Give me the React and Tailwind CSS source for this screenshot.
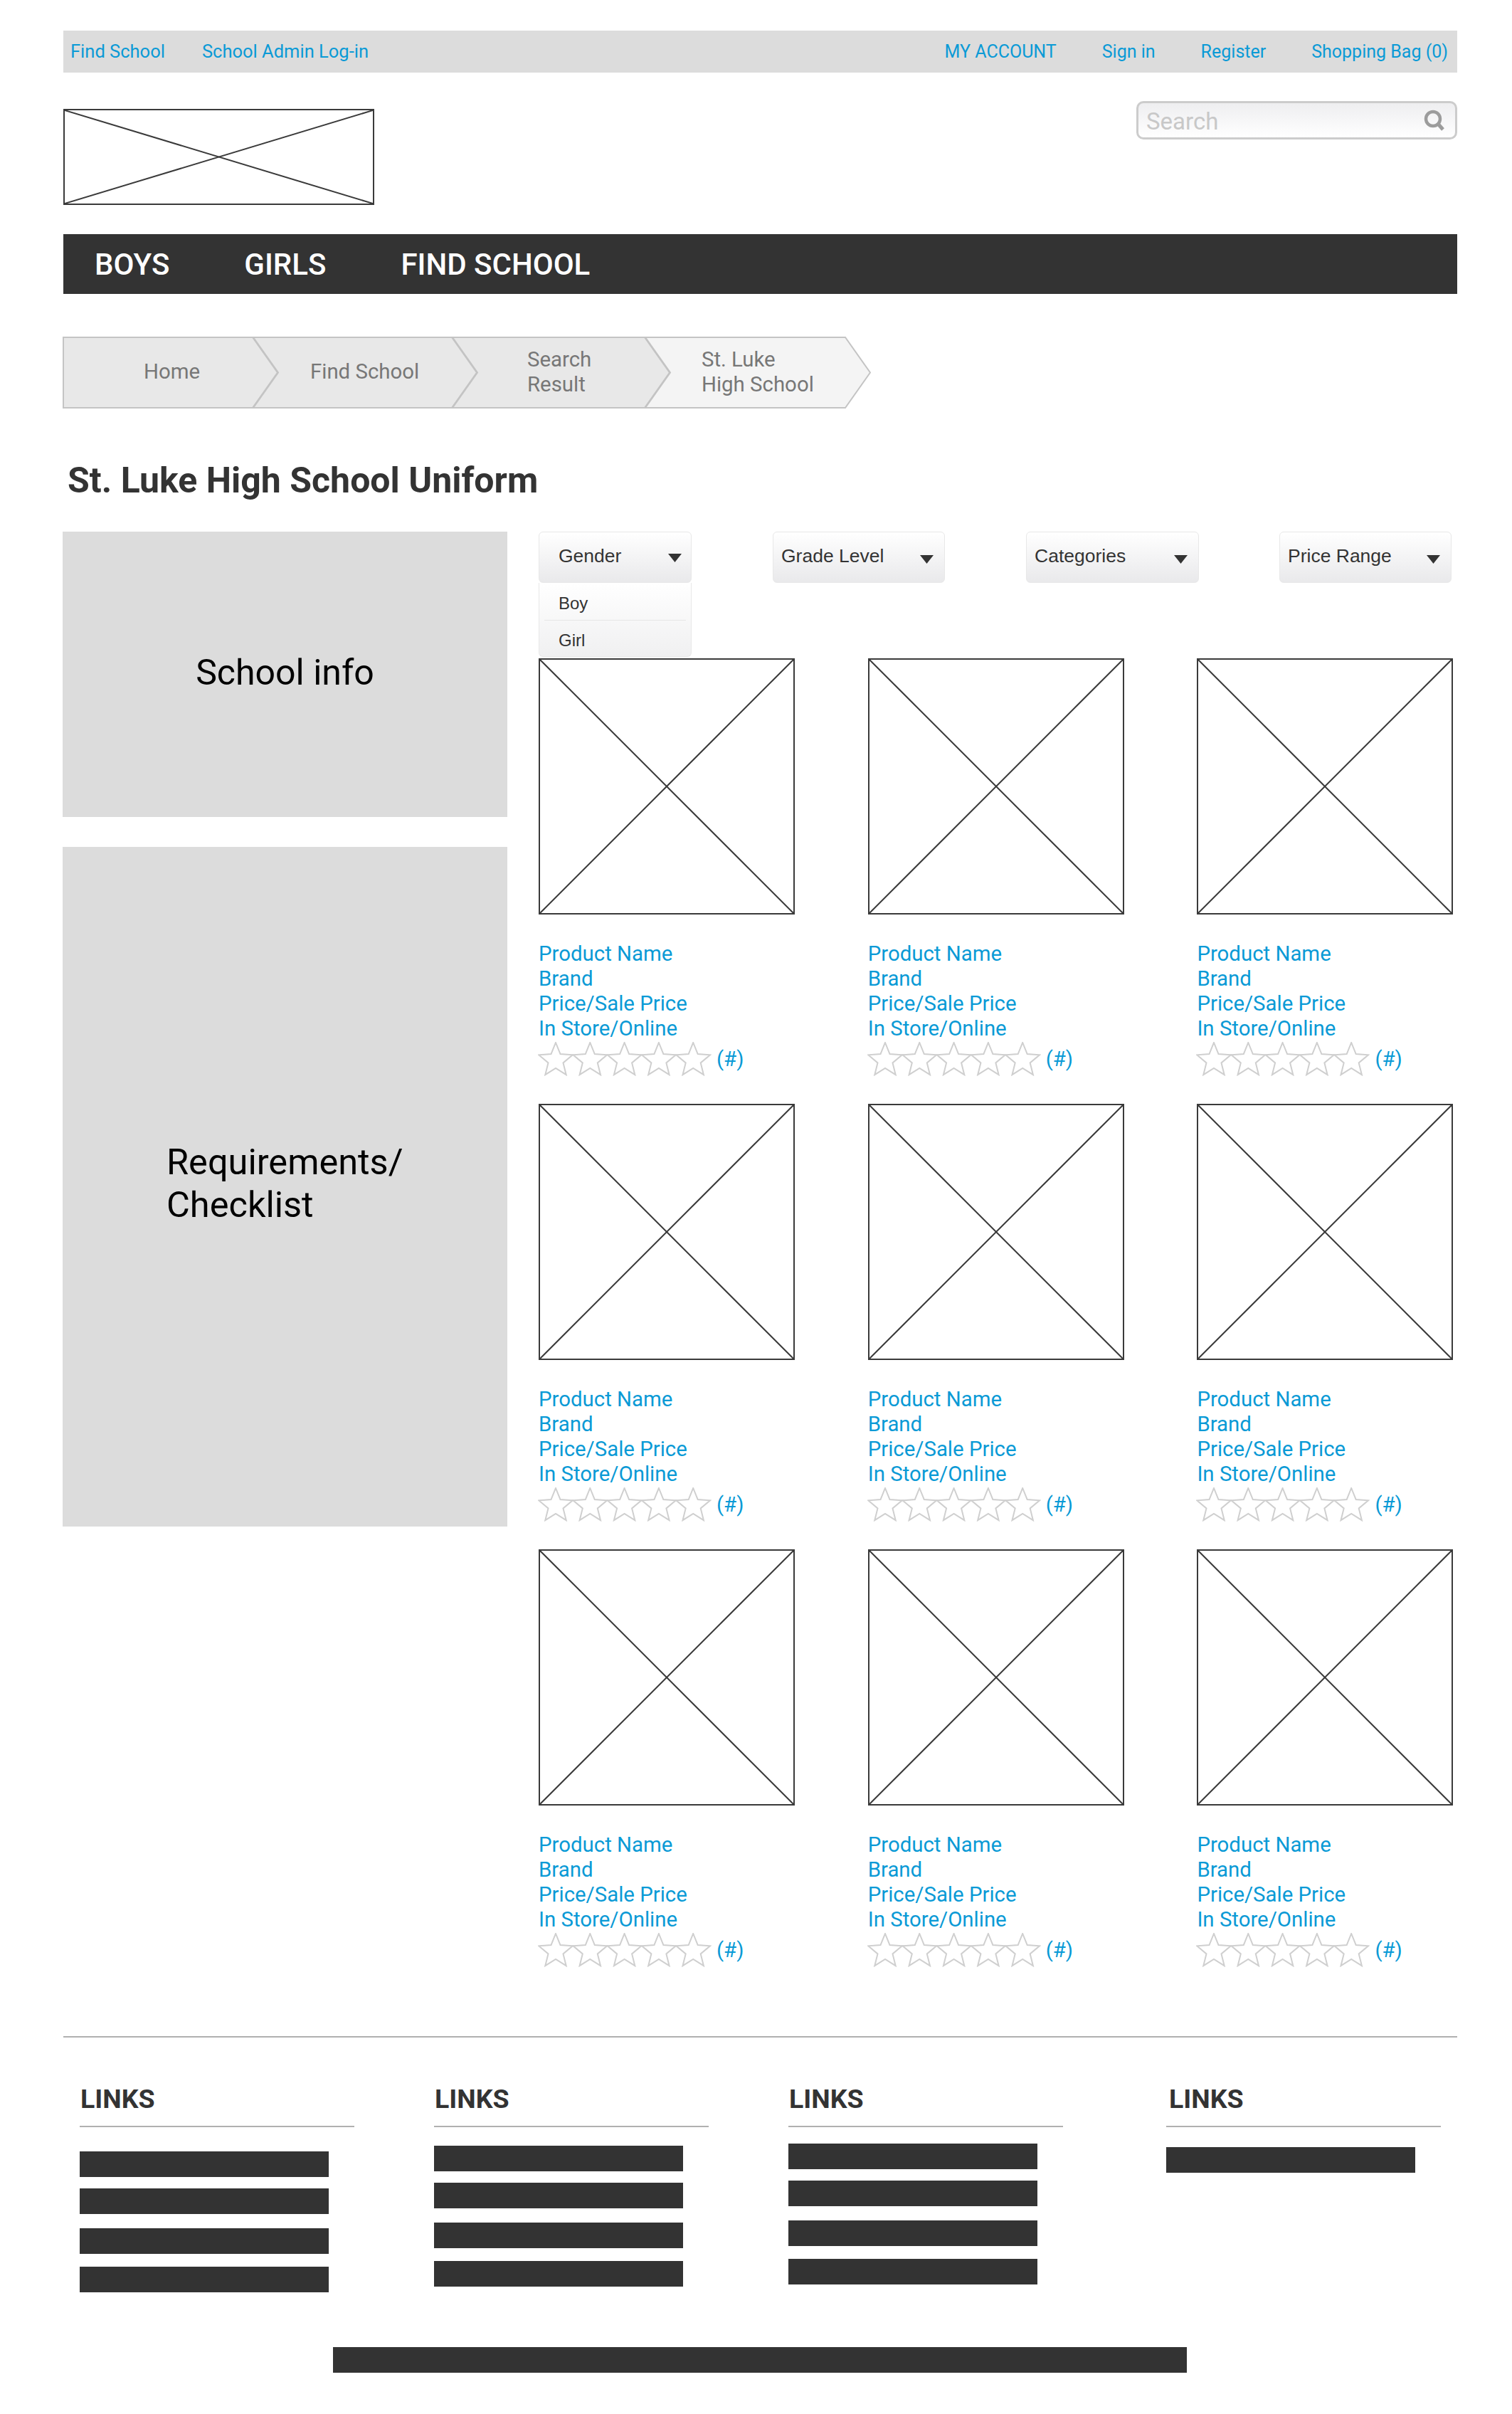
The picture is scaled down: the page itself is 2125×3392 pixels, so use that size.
import React from 'react';

const linkColumns = [
  { offset: 'mt-[34px]', marginRight: 'mr-[112px]', pad: 'pl-[1px]' },
  { offset: 'mt-[26px]', marginRight: 'mr-[112px]', pad: 'pl-[1px]' },
  { offset: 'mt-[23px]', marginRight: 'mr-[145px]', pad: 'pl-[1px]' },
  { offset: 'mt-[28px]', marginRight: '', pad: 'pl-[4px]', single: true },
];

const crumbs = [
  { width: 'w-[303px]', lines: ['Home'], pad: 'pl-[114px]', fill: '#e8e8e8', first: true, w: 303 },
  { width: 'w-[316px]', lines: ['Find School'], pad: 'pl-[81px]', fill: '#e8e8e8', w: 316 },
  { width: 'w-[307px]', lines: ['Search', 'Result'], pad: 'pl-[106px]', fill: '#e8e8e8', w: 307 },
  { width: 'w-[318px]', lines: ['St. Luke', 'High School'], pad: 'pl-[80px]', fill: '#f4f4f4', w: 318 },
];

const filters = [
  { label: 'Gender', box: 'w-[215px] ml-0', pad: 'pl-[27px]', caret: 'right-[13px] top-[30px]', open: true },
  { label: 'Grade Level', box: 'w-[242px] ml-[114px]', pad: 'pl-[11px]', caret: 'right-[15px] top-[32px]' },
  { label: 'Categories', box: 'w-[243px] ml-[114px]', pad: 'pl-[11px]', caret: 'right-[15px] top-[32px]' },
  { label: 'Price Range', box: 'w-[242px] ml-[113px]', pad: 'pl-[11px]', caret: 'right-[15px] top-[32px]' },
];

const products = [1, 2, 3, 4, 5, 6, 7, 8, 9];

const Placeholder = ({ className }) => (
  <div className={`border-2 border-[#3a3a3a] bg-white ${className}`}>
    <svg className="block w-full h-full" viewBox="0 0 100 100" preserveAspectRatio="none">
      <line x1="0" y1="0" x2="100" y2="100" stroke="#3a3a3a" strokeWidth="2" vectorEffect="non-scaling-stroke" />
      <line x1="100" y1="0" x2="0" y2="100" stroke="#3a3a3a" strokeWidth="2" vectorEffect="non-scaling-stroke" />
    </svg>
  </div>
);

const starPoints = (cx) => {
  const pts = [];
  for (let i = 0; i < 10; i++) {
    const r = i % 2 === 0 ? 25 : 11;
    const a = (Math.PI / 5) * i - Math.PI / 2;
    pts.push(`${(cx + r * Math.cos(a)).toFixed(1)},${(26 + r * Math.sin(a)).toFixed(1)}`);
  }
  return pts.join(' ');
};

const Stars = () => (
  <svg width="244" height="48" viewBox="0 0 244 48" className="block shrink-0">
    {[0, 1, 2, 3, 4].map((i) => (
      <polygon key={i} points={starPoints(25 + i * 48.3)} fill="none" stroke="#cfcfcf" strokeWidth="2" />
    ))}
  </svg>
);

const Crumb = ({ crumb, index }) => {
  const h = 101;
  const m = 50.5;
  const d = 36;
  const end = crumb.w - d;
  const points = crumb.first
    ? `1,1 ${end},1 ${crumb.w - 1},${m} ${end},${h - 1} 1,${h - 1}`
    : `1,1 ${end},1 ${crumb.w - 1},${m} ${end},${h - 1} 1,${h - 1} ${d},${m}`;
  return (
    <div className={`relative h-[101px] ${crumb.width} ${index > 0 ? '-ml-[36px]' : ''}`}>
      <svg className="absolute inset-0" width={crumb.w} height={h}>
        <polygon points={points} fill={crumb.fill} stroke="#c4c4c4" strokeWidth="2" />
      </svg>
      <div className={`relative h-full flex flex-col justify-center pb-[2px] text-[29.4px] leading-[35px] text-[#777] ${crumb.pad}`}>
        {crumb.lines.map((line) => (
          <span key={line}>{line}</span>
        ))}
      </div>
    </div>
  );
};

const Caret = ({ className }) => (
  <svg width="19" height="12" viewBox="0 0 19 12" className={`block absolute ${className}`}>
    <polygon points="0,0 19,0 9.5,12" fill="#333" />
  </svg>
);

const Filter = ({ filter }) => (
  <div className={`relative h-[72px] ${filter.box}`}>
    <div className={`relative h-full flex items-center pb-[2px] rounded-[6px] border border-[#e8e8e8] bg-gradient-to-b from-white to-[#e9e9eb] font-['Liberation_Sans',sans-serif] text-[26.5px] text-[#333] ${filter.pad}`}>
      {filter.label}
      <Caret className={filter.caret} />
    </div>
    {filter.open && (
      <div className="absolute z-10 top-[72px] left-0 w-full h-[104px] rounded-b-[6px] border border-t-0 border-[#e8e8e8] bg-gradient-to-b from-white to-[#f0f0f1] px-[7px] font-['Liberation_Sans',sans-serif] text-[24px] text-[#333]">
        <div className="h-[53px] pt-[12px] pl-[20px] leading-[34px] border-b border-[#e6e6e6]">Boy</div>
        <div className="pt-[11px] pl-[20px] leading-[34px]">Girl</div>
      </div>
    )}
  </div>
);

const ProductCard = () => (
  <div className="h-[626px]">
    <Placeholder className="w-[360px] h-[360px]" />
    <div className="mt-[38px] text-[29.4px] leading-[35px] text-[#0a9ad6]">
      <p>Product Name</p>
      <p>Brand</p>
      <p>Price/Sale Price</p>
      <p>In Store/Online</p>
    </div>
    <div className="flex items-center -ml-[1px] mt-[1px]">
      <Stars />
      <span className="ml-[7px] text-[29.4px] leading-[48px]">(#)</span>
    </div>
  </div>
);

const Bar = ({ className = '' }) => <div className={`w-[350px] h-[36px] bg-[#333] ${className}`} />;

const LinkColumn = ({ column }) => (
  <div className={`w-[386px] ${column.marginRight}`}>
    <h3 className={`h-[70px] pt-[8px] text-[37.5px] leading-[44px] font-bold text-[#333] border-b-2 border-[#b0b0b0] ${column.pad}`}>LINKS</h3>
    <div className={column.offset}>
      <Bar />
      {!column.single && (
        <>
          <Bar className="mt-[16px]" />
          <Bar className="mt-[20px]" />
          <Bar className="mt-[18px]" />
        </>
      )}
    </div>
  </div>
);

export default function App() {
  return (
    <div className="w-[2125px] h-[3392px] bg-white pt-[43px] pl-[89px] font-['Roboto',sans-serif] overflow-hidden">
      <div className="w-[1959px]">
        <div className="h-[59px] bg-[#dcdcdc] flex items-center justify-between pl-[10px] pr-[13px] text-[#0a9ad6]">
          <div className="flex gap-[52px] text-[25.5px]">
            <a href="#">Find School</a>
            <a href="#">School Admin Log-in</a>
          </div>
          <div className="flex gap-[64px] text-[25px]">
            <a href="#">MY ACCOUNT</a>
            <a href="#">Sign in</a>
            <a href="#">Register</a>
            <a href="#">Shopping Bag (0)</a>
          </div>
        </div>

        <div className="mt-[40px] flex justify-between items-start">
          <Placeholder className="mt-[11px] w-[437px] h-[135px]" />
          <div className="w-[451px] h-[54px] rounded-[10px] border-[3px] border-[#ccc] bg-gradient-to-b from-[#eeeef0] to-white flex items-center justify-between pl-[11px] pr-[14px]">
            <span className="pt-[4px] text-[33px] text-[#c8c8c8]">Search</span>
            <svg width="30" height="30" viewBox="0 0 30 30">
              <circle cx="13" cy="13" r="10" fill="none" stroke="#9c9c9c" strokeWidth="4.5" />
              <line x1="20" y1="20" x2="27" y2="28" stroke="#9c9c9c" strokeWidth="5" />
            </svg>
          </div>
        </div>

        <nav className="mt-[41px] h-[84px] bg-[#333] flex items-center pl-[44px] gap-[105px] text-[42px] font-medium text-white">
          <a href="#">BOYS</a>
          <a href="#">GIRLS</a>
          <a href="#">FIND SCHOOL</a>
        </nav>

        <div className="mt-[60px] -ml-[1px] flex">
          {crumbs.map((crumb, i) => (
            <Crumb key={crumb.lines[0]} crumb={crumb} index={i} />
          ))}
        </div>

        <h1 className="mt-[68px] ml-[6px] h-[105px] text-[50px] leading-[66px] font-bold text-[#333]">St. Luke High School Uniform</h1>

        <div className="flex">
          <aside className="w-[625px] -ml-[1px] shrink-0">
            <div className="h-[401px] bg-[#dcdcdc] flex items-center justify-center pb-[5px] text-[50px] text-black">School info</div>
            <div className="mt-[42px] h-[955px] bg-[#dcdcdc] flex items-center pl-[146px] pb-[10px] text-[50.5px] leading-[60px] text-black">
              <div>
                Requirements/
                <br />
                Checklist
              </div>
            </div>
          </aside>

          <div className="ml-[44px]">
            <div className="flex">
              {filters.map((filter) => (
                <Filter key={filter.label} filter={filter} />
              ))}
            </div>
            <div className="mt-[106px] grid grid-cols-[360px_360px_360px] gap-x-[102.7px] text-[#0a9ad6]">
              {products.map((p) => (
                <ProductCard key={p} />
              ))}
            </div>
          </div>
        </div>

        <div className="mt-[58px] h-[2px] bg-[#b0b0b0]" />
        <div className="mt-[56px] ml-[23px] flex">
          {linkColumns.map((column, i) => (
            <LinkColumn key={i} column={column} />
          ))}
        </div>
        <div className="mt-[77px] ml-[379px] w-[1200px] h-[36px] bg-[#333]" />
      </div>
    </div>
  );
}
